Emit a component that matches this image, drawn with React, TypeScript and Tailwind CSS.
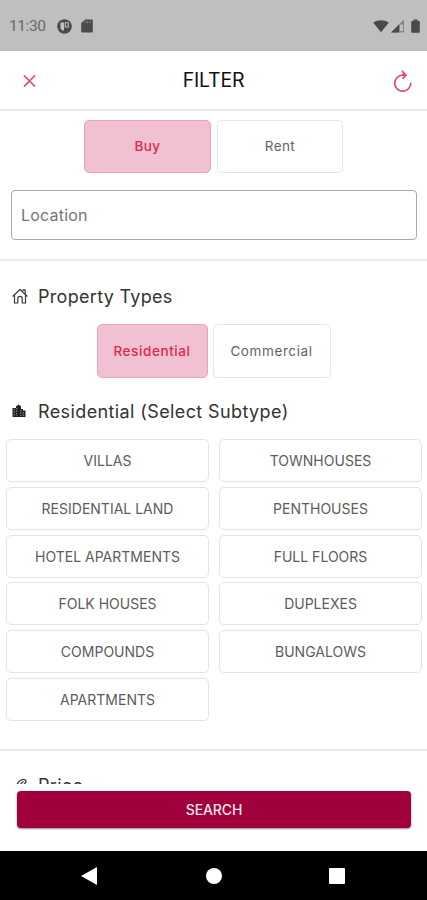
import React, { useState } from "react";
import { clsx } from "clsx";

const SUBTYPES = [
  "VILLAS",
  "TOWNHOUSES",
  "RESIDENTIAL LAND",
  "PENTHOUSES",
  "HOTEL APARTMENTS",
  "FULL FLOORS",
  "FOLK HOUSES",
  "DUPLEXES",
  "COMPOUNDS",
  "BUNGALOWS",
  "APARTMENTS",
];

const StatusBar: React.FC = () => (
  <div className="flex h-[51px] shrink-0 items-center bg-[#bfbfbf] pt-[2px] pl-[9px] pr-[7px] text-[#4a4a4a]">
    <span className="w-[48px] font-['Roboto',sans-serif] text-[15.5px] tracking-[-0.4px] text-[#6a6a6a]">
      11:30
    </span>
    <svg width="15" height="15" viewBox="0 0 15 15" className="mb-px">
      <circle cx="7.5" cy="7.5" r="7.3" fill="currentColor" />
      <path d="M3.5 3.5H7v8H5.500L3.500 9.500z" fill="#bfbfbf" />
      <path d="M8.3 3.8h3v4.200h-3z" fill="none" stroke="#bfbfbf" strokeWidth="1.1" />
    </svg>
    <svg width="12" height="14" viewBox="0 0 12 14" className="mb-px ml-[9px]">
      <path d="M4 .5h6.8c.6 0 1 .4 1 1v11c0 .6-.4 1-1 1H1.2c-.6 0-1-.4-1-1V4.2z" fill="currentColor" />
      <path d="M4.2 2v2.2M6.6 2v2.2M9 2v2.2" stroke="#888" />
    </svg>
    <div className="flex-1" />
    <svg width="16" height="14" viewBox="0 0 16 14" className="mb-[2px]">
      <path d="M8 13.3.3 3.7C4.5.5 11.5.5 15.7 3.7z" fill="currentColor" />
    </svg>
    <svg width="14" height="14" viewBox="0 0 14 14" className="mb-[2px] ml-[2px]">
      <path d="M0 13.5 13 .5v13z" fill="#858585" />
      <path d="M0 13.5 8 5.5v8z" fill="currentColor" />
      <path d="M9 5.5h3V12H9z" fill="#bfbfbf" />
    </svg>
    <svg width="9" height="14" viewBox="0 0 9 14" className="mb-[2px] ml-[6px]">
      <path
        d="M2.5.5h4V2H8c.5 0 .8.3.8.8V13c0 .5-.3.8-.8.8H1c-.5 0-.8-.3-.8-.8V2.8c0-.5.3-.8.8-.8h1.500z"
        fill="currentColor"
      />
    </svg>
  </div>
);

const Header: React.FC = () => (
  <header className="flex h-[60px] shrink-0 items-center justify-between border-b-2 border-[#e9e9e9] pt-px pl-[23px] pr-[15px]">
    <button aria-label="Close" className="w-[20px] text-[#dd4c77]">
      <svg width="13" height="12" viewBox="0 0 13 12" stroke="currentColor" strokeWidth="1.7">
        <path d="M1 .5 12 11.5M12 .5 1 11.5" />
      </svg>
    </button>
    <h1 className="pr-[9px] text-[19.5px] tracking-[-0.2px] text-[#111]">FILTER</h1>
    <button aria-label="Reset" className="mt-px text-[#dd4c77]">
      <svg width="19" height="22" viewBox="0 0 19 22" fill="none" stroke="currentColor" strokeWidth="1.7">
        <path d="M12.500 5.200H9.500a8 8 0 1 0 8.200 7.500" />
        <path d="M9 .8 13 5.200 9.500 8.800" />
        <path d="m9.500 2 3.500 3.200H9.500z" fill="currentColor" stroke="none" />
      </svg>
    </button>
  </header>
);

interface ToggleProps {
  label: string;
  active: boolean;
  onClick: () => void;
  className?: string;
}

const Toggle: React.FC<ToggleProps> = ({ label, active, onClick, className }) => (
  <button
    onClick={onClick}
    className={clsx(
      "rounded-[5px] border",
      active
        ? "border-[#e7a4bc] bg-[#f1c0d3] font-medium text-[#d92a4c]"
        : "border-[#e5e5e5] bg-white text-[#636363]",
      className,
    )}
  >
    {label}
  </button>
);

const HouseIcon: React.FC = () => (
  <svg
    width="16"
    height="16"
    viewBox="0 0 16 16"
    fill="none"
    stroke="#3a3a3a"
    strokeWidth="1.2"
    strokeLinejoin="round"
  >
    <path d="m.6 8.500 7.400-7 7.400 7M2.500 7v8h3.300v-4.500a2.200 2.200 0 0 1 4.400 0V15h3.300V7M11 3V1.800h2.200v4" />
  </svg>
);

const CityIcon: React.FC = () => (
  <svg width="14" height="14" viewBox="0 0 14 14">
    <path d="M.5 4H4V2.500L6.500.5 9 2.500V5h2v1.500h2.500V13H.5z" fill="#222" />
    <path d="M2.300 5v7M4.700 4v8M8.800 6v6M11.300 8v4" stroke="#aaa" strokeWidth=".8" strokeDasharray="1.5 1" />
  </svg>
);

const PriceIcon: React.FC = () => (
  <svg width="16" height="16" viewBox="0 0 16 16" fill="none" stroke="#444" strokeWidth="1.3">
    <path d="M5.500 5.500C7 2.500 11 .5 13.500 2c1.500 1.500-.5 3.500-2 5M8.500 6l3-2.500M5 5l2 2M3 12h9" />
  </svg>
);

export default function App() {
  const [purpose, setPurpose] = useState("Buy");
  const [type, setType] = useState("Residential");
  const [selected, setSelected] = useState<string | null>(null);

  return (
    <div className="flex h-[900px] w-[427px] flex-col overflow-hidden bg-white font-['Inter',sans-serif]">
      <StatusBar />
      <Header />

      <main className="min-h-0 flex-1 overflow-hidden">
        <section className="h-[150px] border-b-2 border-[#e9e9e9] pt-[9px]">
          <div className="flex justify-center gap-[6px] text-[13.5px] tracking-[0.4px]">
            <Toggle
              label="Buy"
              active={purpose === "Buy"}
              onClick={() => setPurpose("Buy")}
              className="h-[53px] w-[127px]"
            />
            <Toggle
              label="Rent"
              active={purpose === "Rent"}
              onClick={() => setPurpose("Rent")}
              className="h-[53px] w-[126px]"
            />
          </div>
          <input
            placeholder="Location"
            className="mt-[17px] ml-[11px] block h-[50px] w-[406px] rounded-[4px] border border-[#aaa] px-[9px] text-[16px] tracking-[0.2px] outline-none placeholder:text-[#757575]"
          />
        </section>

        <section className="h-[490px] border-b-2 border-[#e9e9e9] pt-[20px]">
          <div className="flex h-[30px] items-center gap-[10px] pl-[12px]">
            <HouseIcon />
            <h2 className="text-[18px] tracking-[0.3px] text-[#333]">Property Types</h2>
          </div>
          <div className="mt-[13px] flex justify-center gap-[5px] text-[13.5px] tracking-[0.6px]">
            <Toggle
              label="Residential"
              active={type === "Residential"}
              onClick={() => setType("Residential")}
              className="h-[54px] w-[111px]"
            />
            <Toggle
              label="Commercial"
              active={type === "Commercial"}
              onClick={() => setType("Commercial")}
              className="h-[54px] w-[118px]"
            />
          </div>
          <div className="mt-[18px] flex h-[30px] items-center gap-[12px] pl-[12px]">
            <CityIcon />
            <h2 className="text-[18px] tracking-[0.39px] text-[#333]">Residential (Select Subtype)</h2>
          </div>
          <div className="mt-[13px] grid grid-cols-2 gap-x-[10px] gap-y-[4.8px] pl-[6px] pr-[5px]">
            {SUBTYPES.map((name) => (
              <button
                key={name}
                onClick={() => setSelected(name)}
                className={clsx(
                  "h-[43px] rounded-[5px] border text-[14px]",
                  selected === name
                    ? "border-[#e7a4bc] bg-[#f1c0d3] text-[#d92a4c]"
                    : "border-[#e4e4e4] text-[#5c5c5c]",
                )}
              >
                {name}
              </button>
            ))}
          </div>
        </section>

        <section className="flex h-[33px] items-start gap-[10px] overflow-hidden pt-[20px] pl-[12px]">
          <div className="pt-[7px]">
            <PriceIcon />
          </div>
          <h2 className="text-[18px] leading-[30px] tracking-[0.3px] text-[#333]">Price</h2>
        </section>
      </main>

      <footer className="h-[67px] shrink-0 bg-white pt-[7px] pl-[17px] pr-[16px]">
        <button className="h-[37px] w-full rounded-[4px] bg-[#a0003b] text-[14px] font-medium tracking-[-0.1px] text-[#f9e6ec] shadow-[0_1px_2px_rgba(0,0,0,0.45)]">
          SEARCH
        </button>
      </footer>

      <nav className="flex h-[49px] shrink-0 items-center justify-between bg-black pl-[81px] pr-[82px]">
        <svg width="16" height="18" viewBox="0 0 16 18">
          <path d="M16 0v18L0 9z" fill="#fff" />
        </svg>
        <div className="ml-px size-[16px] rounded-full bg-white" />
        <div className="size-[16px] rounded-[1px] bg-white" />
      </nav>
    </div>
  );
}
